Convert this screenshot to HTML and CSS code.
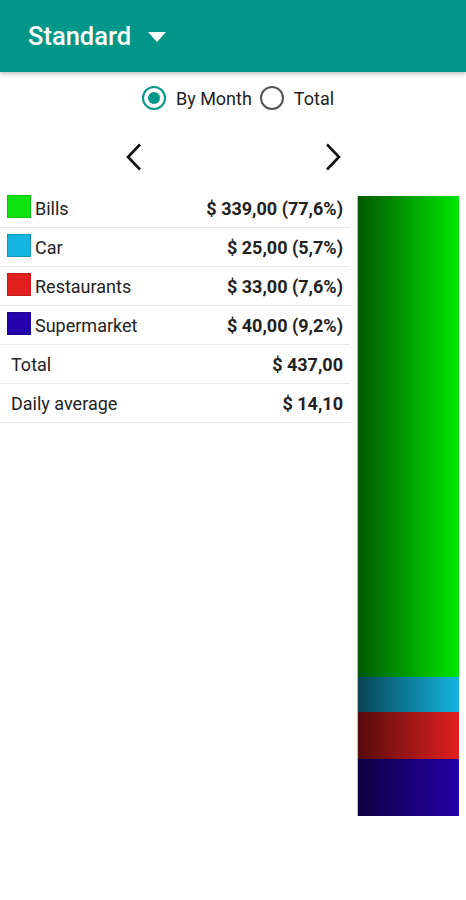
FILE: index.html
```html
<!DOCTYPE html>
<html>
<head>
<meta charset="utf-8">
<link rel="stylesheet" href="styles.css">
</head>
<body>
<header class="appbar">
  <span class="title">Standard</span>
  <svg class="caret" width="18" height="10" viewBox="0 0 18 10"><path d="M0 0 L18 0 L9 10 Z" fill="#fff"/></svg>
</header>
<div class="modes">
  <label class="radio on"><span class="ring"></span>By Month</label>
  <label class="radio"><span class="ring"></span>Total</label>
</div>
<div class="nav">
  <svg width="16" height="28" viewBox="0 0 16 28"><path d="M14 1.5 L2 14 L14 26.5" fill="none" stroke="#111" stroke-width="2.6"/></svg>
  <svg width="16" height="28" viewBox="0 0 16 28"><path d="M2 1.5 L14 14 L2 26.5" fill="none" stroke="#111" stroke-width="2.6"/></svg>
</div>
<main class="content">
  <div class="table">
    <div class="row"><span class="sw green"></span><span class="label">Bills</span><span class="amt">$ 339,00 (77,6%)</span></div>
    <div class="row"><span class="sw cyan"></span><span class="label">Car</span><span class="amt">$ 25,00 (5,7%)</span></div>
    <div class="row"><span class="sw red"></span><span class="label">Restaurants</span><span class="amt">$ 33,00 (7,6%)</span></div>
    <div class="row"><span class="sw blue"></span><span class="label">Supermarket</span><span class="amt">$ 40,00 (9,2%)</span></div>
    <div class="row plain"><span class="label">Total</span><span class="amt">$ 437,00</span></div>
    <div class="row plain"><span class="label">Daily average</span><span class="amt">$ 14,10</span></div>
  </div>
  <div class="chart">
    <div class="seg green" style="height:481px"></div>
    <div class="seg cyan" style="height:35px"></div>
    <div class="seg red" style="height:47px"></div>
    <div class="seg blue" style="height:57px"></div>
  </div>
</main>
</body>
</html>
```
FILE: styles.css
```css
* { box-sizing: border-box; }
html, body { margin: 0; background: #fff; }
body { font-family: Roboto, "Noto Sans", sans-serif; color: #222; width: 466px; }

.appbar {
  height: 72px;
  background: #009688;
  display: flex;
  align-items: center;
  padding-left: 28px;
  gap: 17px;
  box-shadow: 0 2px 4px rgba(0,0,0,0.25);
  position: relative;
}
.title { color: #fff; font-size: 25.5px; font-weight: 500; }
.caret { margin-top: 1px; }

.modes {
  display: flex;
  justify-content: center;
  gap: 8px;
  margin-top: 14px;
  height: 24px;
  align-items: center;
  padding-left: 10px;
}
.radio {
  display: flex;
  align-items: center;
  gap: 10px;
  font-size: 18px;
  color: #222;
}
.ring {
  width: 24px; height: 24px;
  border-radius: 50%;
  border: 2px solid #555;
  display: flex;
  align-items: center;
  justify-content: center;
}
.radio.on .ring { border-color: #009688; }
.radio.on .ring::after {
  content: "";
  width: 12px; height: 12px;
  border-radius: 50%;
  background: #009688;
}

.nav {
  display: flex;
  justify-content: center;
  gap: 183px;
  margin-top: 33px;
  height: 28px;
  padding-left: 1px;
}

.content {
  display: flex;
  margin-top: 18px;
  gap: 7px;
}
.table { width: 350px; }
.row {
  height: 39px;
  display: flex;
  align-items: center;
  border-bottom: 1.5px solid #e6e6e6;
  padding: 1px 7px 0 7px;
  font-size: 18px;
}
.row.plain { padding-left: 11px; }
.sw {
  width: 24px; height: 23px;
  border: 1px solid rgba(0,0,0,0.15);
  margin-right: 4px;
  margin-top: -4px;
}
.label { flex: 1; color: #222; }
.amt { font-weight: 700; color: #222; }

.green { background-color: #0fe40f; }
.cyan { background-color: #14b4e0; }
.red { background-color: #e21f1f; }
.blue { background-color: #2200aa; }

.chart {
  width: 102px;
  margin-top: 7px;
  display: flex;
  flex-direction: column;
  border-left: 1px solid #bbb;
}
.seg {
  background-image: linear-gradient(to right, rgba(0,0,0,0.62), rgba(0,0,0,0));
}
.seg.green { background-color: #00e600; }
```
